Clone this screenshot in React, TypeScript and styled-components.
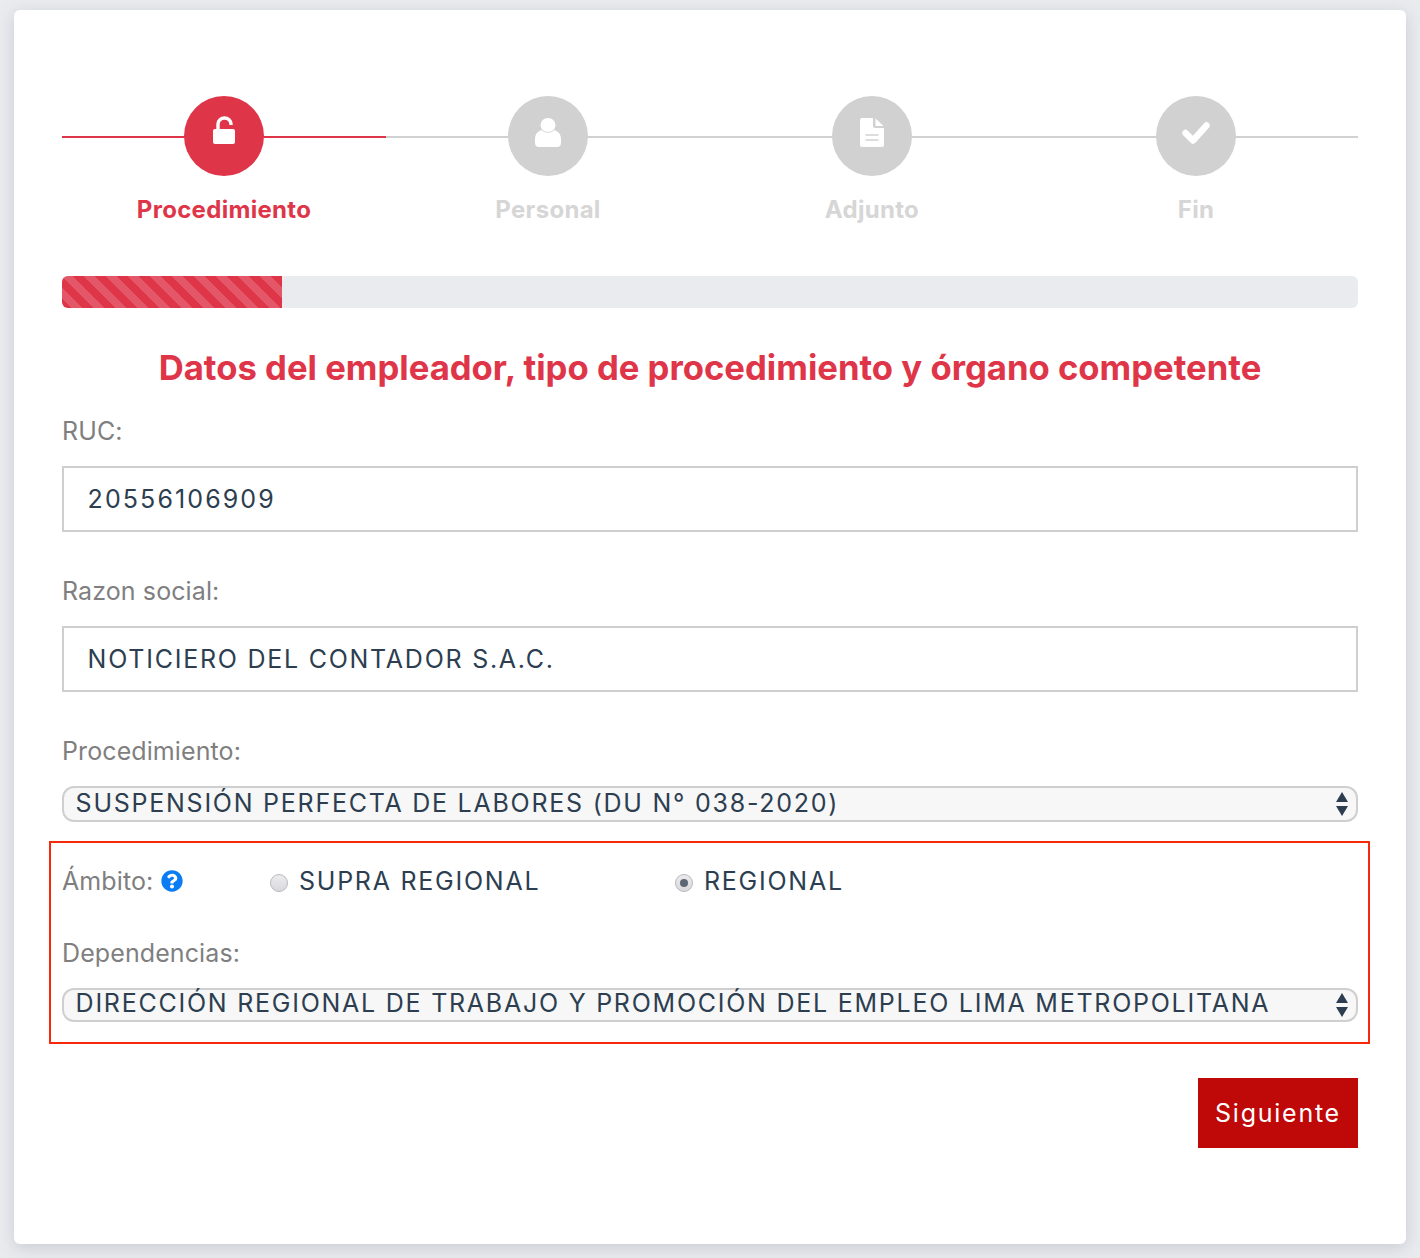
import React from "react";
import styled, { createGlobalStyle } from "styled-components";
import { FaQuestionCircle } from "react-icons/fa";

const Global = createGlobalStyle`
  html, body { margin: 0; padding: 0; background: #e9ebef; }
  body { font-family: Inter, "Liberation Sans", sans-serif; }
  * { box-sizing: border-box; }
`;

const Page = styled.div`
  width: 1420px;
  height: 1258px;
  padding: 10px 14px 14px;
  overflow: hidden;
`;

const Card = styled.main`
  height: 1234px;
  background: #fff;
  border-radius: 6px;
  padding: 86px 48px 0;
  box-shadow: 0 4px 16px rgba(120, 125, 140, 0.28);
`;

const Steps = styled.ol`
  display: grid;
  grid-template-columns: repeat(4, 324px);
  list-style: none;
  margin: 0;
  padding: 0;
`;

const Step = styled.li<{ $active?: boolean }>`
  position: relative;
  display: flex;
  flex-direction: column;
  align-items: center;
  height: 130px;
  color: ${(p) => (p.$active ? "#df3549" : "#d6d6d6")};
  &::before {
    content: "";
    position: absolute;
    left: 0;
    right: 0;
    top: 40px;
    height: 2px;
    background: ${(p) => (p.$active ? "#df3549" : "#d1d1d1")};
  }
`;

const Bubble = styled.span<{ $active?: boolean; $lift: number }>`
  position: relative;
  width: 80px;
  height: 80px;
  border-radius: 50%;
  background: ${(p) => (p.$active ? "#df3549" : "#d1d1d1")};
  display: flex;
  align-items: center;
  justify-content: center;
  padding-bottom: ${(p) => p.$lift * 2}px;
`;

const StepLabel = styled.span`
  margin-top: 20px;
  font-family: Inter, "Liberation Sans", sans-serif;
  font-weight: 700;
  font-size: 24px;
  line-height: 28px;
  letter-spacing: 0.3px;
`;

const Track = styled.div`
  margin-top: 50px;
  height: 32px;
  border-radius: 6px;
  background: #e9ebef;
  overflow: hidden;
`;

const Fill = styled.div`
  width: 220px;
  height: 100%;
  background-color: #df3549;
  background-image: linear-gradient(
    45deg,
    rgba(255, 255, 255, 0.17) 25%,
    transparent 25%,
    transparent 50%,
    rgba(255, 255, 255, 0.17) 50%,
    rgba(255, 255, 255, 0.17) 75%,
    transparent 75%,
    transparent
  );
  background-size: 22px 22px;
`;

const Title = styled.h1`
  margin: 40px 0 0;
  height: 39px;
  text-align: center;
  color: #df3549;
  font-family: Inter, "Liberation Sans", sans-serif;
  font-weight: 700;
  font-size: 34.67px;
  line-height: 38px;
`;

const Field = styled.div<{ $mt: number }>`
  margin-top: ${(p) => p.$mt}px;
`;

const Label = styled.label`
  display: block;
  height: 30px;
  color: #7f7f7f;
  font-size: 25px;
  line-height: 30px;
  letter-spacing: 0.1px;
`;

const TextInput = styled.input<{ $spacing: number }>`
  display: block;
  width: 100%;
  height: 66px;
  margin-top: 20px;
  padding: 0 23.6px;
  border: 2px solid #cfcfcf;
  border-radius: 0;
  background: #fff;
  outline: none;
  color: #2c3e50;
  font-family: Inter, "Liberation Sans", sans-serif;
  font-size: 25px;
  letter-spacing: ${(p) => p.$spacing}px;
`;

const SelectField = styled.div<{ $h: number; $mt: number; $pb: number }>`
  position: relative;
  display: flex;
  align-items: center;
  height: ${(p) => p.$h}px;
  margin-top: ${(p) => p.$mt}px;
  padding: 0 11.6px ${(p) => p.$pb}px;
  border: 2px solid #cfcfcf;
  border-radius: 12px;
  background: #f7f7f7;
  color: #2c3e50;
  font-size: 25px;
  line-height: 30px;
  letter-spacing: 1.75px;
  white-space: nowrap;
`;

const Arrows = styled.svg`
  position: absolute;
  right: 7px;
  top: 50%;
  margin-top: -13px;
  width: 14px;
  height: 26px;
  fill: #2c3e50;
`;

const Highlight = styled.section`
  margin: 19px -12px 0 -13px;
  height: 203px;
  border: 2px solid #f7290a;
  padding: 0 10px 0 11px;
`;

const ScopeRow = styled.div`
  display: flex;
  align-items: center;
  height: 30px;
  margin-top: 23px;
`;

const ScopeLabel = styled.span`
  display: flex;
  align-items: center;
  gap: 8px;
  width: 208px;
  color: #7f7f7f;
  font-size: 25px;
  line-height: 30px;
  letter-spacing: 0.1px;
`;

const Help = styled(FaQuestionCircle)`
  color: #0a7cf4;
  font-size: 22px;
`;

const RadioOption = styled.label<{ $w: number }>`
  display: flex;
  align-items: center;
  width: ${(p) => p.$w}px;
  color: #2c3e50;
  font-size: 25px;
  letter-spacing: 1.75px;
`;

const Radio = styled.span<{ $on?: boolean }>`
  display: inline-flex;
  align-items: center;
  justify-content: center;
  width: 18px;
  height: 18px;
  margin: 3px 11px 0 0;
  border-radius: 50%;
  border: 1px solid #b9b9bd;
  background: linear-gradient(#ececee, #d9d9dd);
  &::after {
    content: "";
    display: ${(p) => (p.$on ? "block" : "none")};
    width: 8px;
    height: 8px;
    border-radius: 50%;
    background: #5d6675;
  }
`;

const Actions = styled.div`
  display: flex;
  justify-content: flex-end;
  margin-top: 34px;
`;

const Next = styled.button`
  width: 160px;
  height: 70px;
  border: 0;
  border-radius: 0;
  background: #bf0808;
  color: #fff;
  font-family: Inter, "Liberation Sans", sans-serif;
  font-size: 25px;
  letter-spacing: 1.75px;
`;

const UpDown = () => (
  <Arrows viewBox="0 0 14 26">
    <path d="M7 1 L13 11 L1 11 Z" />
    <path d="M1 15 L13 15 L7 25 Z" />
  </Arrows>
);

const LockIcon = () => (
  <svg width="22" height="28" viewBox="0 0 22 28">
    <rect x="0" y="13" width="22" height="15" rx="2" fill="#fff" />
    <path d="M5 14 V8 a6.5 6 0 0 1 13 0 v1" fill="none" stroke="#fff" strokeWidth="3.4" />
  </svg>
);

const UserIcon = () => (
  <svg width="26" height="29" viewBox="0 0 26 29">
    <ellipse cx="13" cy="7" rx="7.5" ry="7" fill="#fff" />
    <path d="M7 12 C9 15.5 17 15.5 19 12 C23 13 26 16 26 21 V25 Q26 29 22 29 H4 Q0 29 0 25 V21 C0 16 3 13 7 12 Z" fill="#fff" />
  </svg>
);

const FileIcon = () => (
  <svg width="24" height="29" viewBox="0 0 24 29">
    <path d="M2 0 H13 V8 Q13 10 15 10 H24 V27 Q24 29 22 29 H2 Q0 29 0 27 V2 Q0 0 2 0 Z" fill="#fff" />
    <path d="M15.5 0.5 L23.5 8 H15.5 Z" fill="#fff" />
    <path d="M5.5 17 H18.5 M5.5 22 H18.5" stroke="#d1d1d1" strokeWidth="1.6" />
  </svg>
);

const CheckIcon = () => (
  <svg width="28" height="22" viewBox="0 0 28 22">
    <path d="M3.5 11 L11 18.5 L24.5 3.5" fill="none" stroke="#fff" strokeWidth="6.4" strokeLinecap="round" strokeLinejoin="round" />
  </svg>
);

const steps = [
  { label: "Procedimiento", icon: <LockIcon />, active: true, lift: 6 },
  { label: "Personal", icon: <UserIcon />, lift: 3.5 },
  { label: "Adjunto", icon: <FileIcon />, lift: 3.5 },
  { label: "Fin", icon: <CheckIcon />, lift: 3 },
];

export default function App() {
  return (
    <Page>
      <Global />
      <Card>
        <Steps>
          {steps.map((s) => (
            <Step key={s.label} $active={s.active}>
              <Bubble $active={s.active} $lift={s.lift}>{s.icon}</Bubble>
              <StepLabel>{s.label}</StepLabel>
            </Step>
          ))}
        </Steps>
        <Track>
          <Fill />
        </Track>
        <Title>Datos del empleador, tipo de procedimiento y órgano competente</Title>
        <Field $mt={29}>
          <Label>RUC:</Label>
          <TextInput readOnly $spacing={2.1} value="20556106909" />
        </Field>
        <Field $mt={44}>
          <Label>Razon social:</Label>
          <TextInput readOnly $spacing={1.75} value="NOTICIERO DEL CONTADOR S.A.C." />
        </Field>
        <Field $mt={44}>
          <Label>Procedimiento:</Label>
          <SelectField role="combobox" $h={36} $mt={20} $pb={2}>
            SUSPENSIÓN PERFECTA DE LABORES (DU N° 038-2020)
            <UpDown />
          </SelectField>
        </Field>
        <Highlight>
          <ScopeRow>
            <ScopeLabel>
              Ámbito: <Help />
            </ScopeLabel>
            <RadioOption $w={405}>
              <Radio />
              SUPRA REGIONAL
            </RadioOption>
            <RadioOption $w={300}>
              <Radio $on />
              REGIONAL
            </RadioOption>
          </ScopeRow>
          <Field $mt={42}>
            <Label>Dependencias:</Label>
            <SelectField role="combobox" $h={34} $mt={20} $pb={4}>
              DIRECCIÓN REGIONAL DE TRABAJO Y PROMOCIÓN DEL EMPLEO LIMA METROPOLITANA
              <UpDown />
            </SelectField>
          </Field>
        </Highlight>
        <Actions>
          <Next>Siguiente</Next>
        </Actions>
      </Card>
    </Page>
  );
}
